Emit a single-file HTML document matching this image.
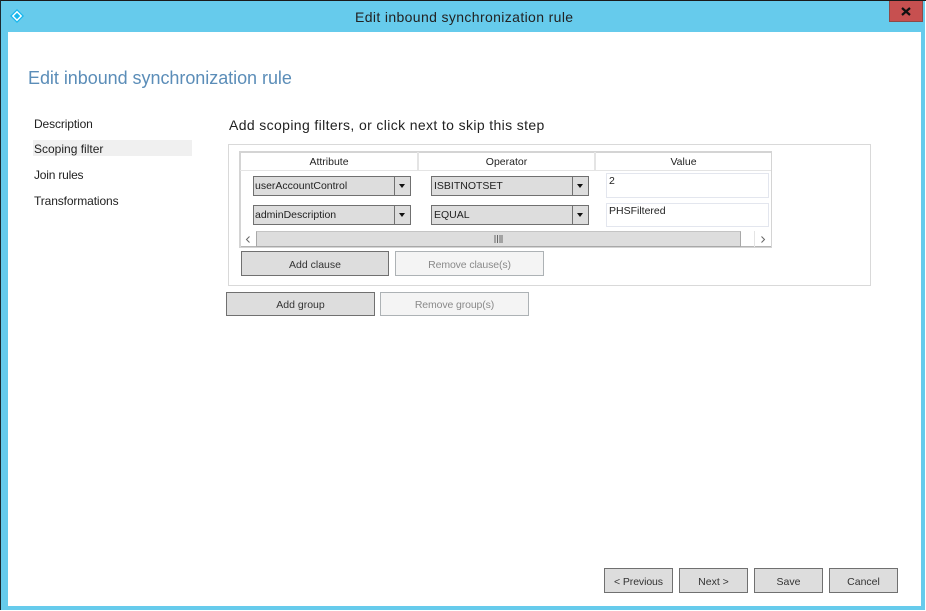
<!DOCTYPE html>
<html><head><meta charset="utf-8">
<style>
*{box-sizing:border-box}
html,body{margin:0;padding:0;background:#fff}
body{width:926px;height:611px;position:relative;overflow:hidden;font-family:"Liberation Sans",sans-serif;color:#222;filter:blur(.25px)}
.a{position:absolute}
.t{position:absolute;white-space:nowrap;line-height:16px}
.btn{position:absolute;background:#dddddd;border:1px solid #707070;font-size:10.5px;text-align:center;color:#333;display:flex;align-items:center;justify-content:center;padding-top:2px}
.dis{background:#f4f4f4;border:1px solid #adb2b5;color:#8a8a8a;letter-spacing:-.12px}
.sel{position:absolute;width:158px;height:20px;background:#dddddd;border:1px solid #707070;font-size:10.5px;line-height:18px;padding-left:1px;color:#222}
.sel i{position:absolute;right:0;top:0;width:16px;height:18px;border-left:1px solid #707070}
.sel i:after{content:"";position:absolute;left:4px;top:7px;border-left:3.5px solid transparent;border-right:3.5px solid transparent;border-top:4px solid #111}
.inp{position:absolute;left:606px;width:163px;background:#fff;border:1px solid #e3e6ee;font-size:10.5px;line-height:13px;padding:1px 2px;color:#222}
.hd{position:absolute;top:152px;height:19px;text-align:center;font-size:10.5px;line-height:20px;color:#222}
.nav{font-size:12px;color:#222;letter-spacing:-.12px}
</style></head><body>
<div class="a" style="left:0;top:0;width:926px;height:611px;background:#fff"></div>
<div class="a" style="left:0;top:1px;width:925px;height:609px;background:#66cbec"></div>
<div class="a" style="left:0;top:0;width:926px;height:1px;background:#1a1a1a"></div>
<div class="a" style="left:0;top:0;width:1px;height:610px;background:#1a2a30"></div>
<div class="a" style="left:8px;top:32px;width:913px;height:574px;background:#fff"></div>

<svg class="a" style="left:8px;top:8px" width="18" height="16" viewBox="0 0 18 16">
<path d="M9 1 L16 8 L9 15 L2 8 Z" fill="#18b7ee"/>
<path d="M9 3.8 L13.2 8 L9 12.2 L4.8 8 Z" fill="none" stroke="#ffffff" stroke-width="1.4"/>
</svg>

<div class="t" style="left:355px;top:9px;font-size:14px;letter-spacing:.37px;color:#222">Edit inbound synchronization rule</div>

<div class="a" style="left:889px;top:1px;width:34px;height:21px;background:#c75050;border:1px solid #8d4a48;border-top:0"></div>
<svg class="a" style="left:901px;top:7px" width="10" height="9" viewBox="0 0 10 9"><path d="M1 1 L9 8 M9 1 L1 8" stroke="#111" stroke-width="2.2"/></svg>

<div class="t" style="left:28px;top:68px;font-size:18px;line-height:20px;letter-spacing:-.04px;color:#5b8db8">Edit inbound synchronization rule</div>

<div class="a" style="left:33px;top:140px;width:159px;height:16px;background:#f0f0f0"></div>
<div class="t nav" style="left:34px;top:116px">Description</div>
<div class="t nav" style="left:34px;top:141px;letter-spacing:0">Scoping filter</div>
<div class="t nav" style="left:34px;top:167px;letter-spacing:-.2px">Join rules</div>
<div class="t nav" style="left:34px;top:193px">Transformations</div>

<div class="t" style="left:229px;top:117px;font-size:14px;letter-spacing:.37px;color:#222">Add scoping filters, or click next to skip this step</div>

<div class="a" style="left:228px;top:144px;width:643px;height:142px;border:1px solid #d9d9d9"></div>
<div class="a" style="left:239px;top:151px;width:533px;height:97px;background:#fff;border:1px solid #d4d4d4;border-top-width:2px;border-left-width:2px"></div>
<div class="a" style="left:240px;top:170px;width:531px;height:1px;background:#e4e4e4"></div>
<div class="a" style="left:417px;top:152px;width:2px;height:19px;background:#e4e4e4"></div>
<div class="a" style="left:594px;top:152px;width:2px;height:19px;background:#e4e4e4"></div>
<div class="hd" style="left:241px;width:176px">Attribute</div>
<div class="hd" style="left:419px;width:175px">Operator</div>
<div class="hd" style="left:596px;width:175px">Value</div>

<div class="sel" style="left:253px;top:176px">userAccountControl<i></i></div>
<div class="sel" style="left:253px;top:205px">adminDescription<i></i></div>
<div class="sel" style="left:431px;top:176px;padding-left:2px">ISBITNOTSET<i></i></div>
<div class="sel" style="left:431px;top:205px;padding-left:2px">EQUAL<i></i></div>

<div class="inp" style="top:173px;height:25px">2</div>
<div class="inp" style="top:203px;height:24px">PHSFiltered</div>

<div class="a" style="left:241px;top:231px;width:530px;height:16px;background:#fff;border-bottom:1px solid #b5b5b5"></div>
<div class="a" style="left:256px;top:231px;width:485px;height:16px;background:#dddddd;border:1px solid #a8a8a8;border-top:1px solid #c4c4c4"></div>
<svg class="a" style="left:244px;top:235px" width="8" height="9" viewBox="0 0 8 9"><path d="M5.5 1.5 L2.5 4.5 L5.5 7.5" fill="none" stroke="#666" stroke-width="1"/></svg>
<svg class="a" style="left:759px;top:235px" width="8" height="9" viewBox="0 0 8 9"><path d="M2.5 1.5 L5.5 4.5 L2.5 7.5" fill="none" stroke="#666" stroke-width="1"/></svg>
<div class="a" style="left:754px;top:231px;width:1px;height:16px;background:#e4e4e4"></div>
<svg class="a" style="left:494px;top:235px" width="9" height="8" viewBox="0 0 9 8"><path d="M1 0V8M3.5 0V8M6 0V8M8 0V8" stroke="#666" stroke-width="1"/></svg>

<div class="btn" style="left:241px;top:251px;width:148px;height:25px">Add clause</div>
<div class="btn dis" style="left:395px;top:251px;width:149px;height:25px">Remove clause(s)</div>
<div class="btn" style="left:226px;top:292px;width:149px;height:24px">Add group</div>
<div class="btn dis" style="left:380px;top:292px;width:149px;height:24px">Remove group(s)</div>

<div class="btn" style="left:604px;top:568px;width:69px;height:25px;letter-spacing:-.1px">&lt; Previous</div>
<div class="btn" style="left:679px;top:568px;width:69px;height:25px">Next &gt;</div>
<div class="btn" style="left:754px;top:568px;width:69px;height:25px">Save</div>
<div class="btn" style="left:829px;top:568px;width:69px;height:25px">Cancel</div>
</body></html>
